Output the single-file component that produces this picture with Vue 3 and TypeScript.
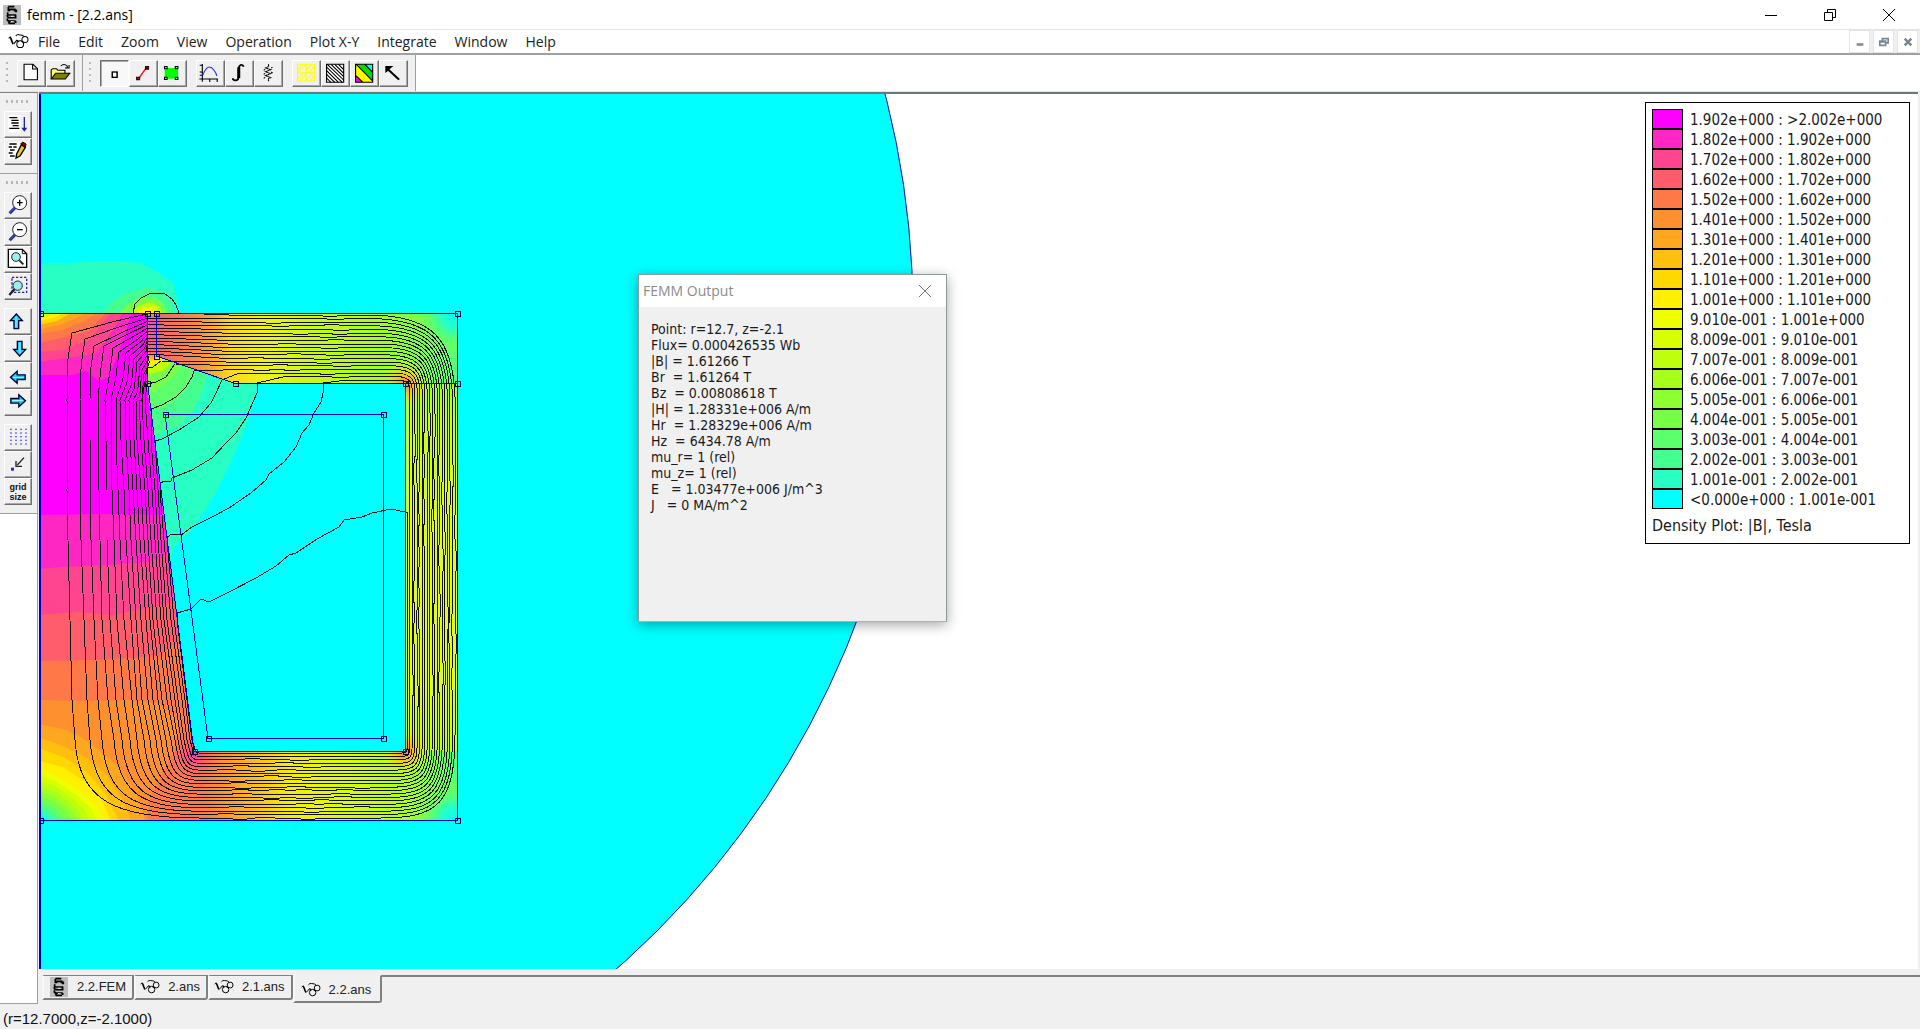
<script setup lang="ts">
type Pt = [number, number]

const menus: string[] = ['File', 'Edit', 'Zoom', 'View', 'Operation', 'Plot X-Y', 'Integrate', 'Window', 'Help']

const fileTools: string[] = ['new', 'open']
const modeTools: string[] = ['point', 'line', 'block']
const plotTools: string[] = ['graph', 'integral', 'circuit']
const viewTools: string[] = ['mesh', 'contour', 'density', 'vector']

const sideTop: string[] = ['script', 'edit']
const sideZoom: string[] = ['zoomin', 'zoomout', 'zoomfit', 'zoomwin']
const sideMove: string[] = ['up', 'down', 'left', 'right']
const sideGrid: string[] = ['grid', 'snap', 'size']

const tabs = [
  { name: '2.2.FEM', icon: 'coil', active: false },
  { name: '2.ans', icon: 'glasses', active: false },
  { name: '2.1.ans', icon: 'glasses', active: false },
  { name: '2.2.ans', icon: 'glasses', active: true },
]

const palette: string[] = [
  '#00ffff', '#27ffc4', '#44ff90', '#5cff6c', '#77ff48', '#8eff30', '#a8ff1c',
  '#c0ff0c', '#d8ff00', '#f0ff00', '#fff000', '#ffd800', '#ffbf0f', '#ffa81f',
  '#ff9030', '#ff7848', '#ff5c6c', '#ff4490', '#ff27c4', '#ff00ff',
]

const legend: string[] = [
  '1.902e+000 : >2.002e+000',
  '1.802e+000 : 1.902e+000',
  '1.702e+000 : 1.802e+000',
  '1.602e+000 : 1.702e+000',
  '1.502e+000 : 1.602e+000',
  '1.401e+000 : 1.502e+000',
  '1.301e+000 : 1.401e+000',
  '1.201e+000 : 1.301e+000',
  '1.101e+000 : 1.201e+000',
  '1.001e+000 : 1.101e+000',
  '9.010e-001 : 1.001e+000',
  '8.009e-001 : 9.010e-001',
  '7.007e-001 : 8.009e-001',
  '6.006e-001 : 7.007e-001',
  '5.005e-001 : 6.006e-001',
  '4.004e-001 : 5.005e-001',
  '3.003e-001 : 4.004e-001',
  '2.002e-001 : 3.003e-001',
  '1.001e-001 : 2.002e-001',
  '<0.000e+000 : 1.001e-001',
]

const output = `Point: r=12.7, z=-2.1
Flux= 0.000426535 Wb
|B| = 1.61266 T
Br  = 1.61264 T
Bz  = 0.00808618 T
|H| = 1.28331e+006 A/m
Hr  = 1.28329e+006 A/m
Hz  = 6434.78 A/m
mu_r= 1 (rel)
mu_z= 1 (rel)
E   = 1.03477e+006 J/m^3
J   = 0 MA/m^2`

// Flux density bands in the centre pole, painted from the strongest outward.
const poleBands: { c: number; d: string }[] = [
  { c: 18, d: 'M40 515L100 514L168 515L205 700V821H40Z' },
  { c: 17, d: 'M40 569L62 567L110 565L150 562L172 552L205 700V821H40Z' },
  { c: 16, d: 'M40 615L80 612L112 615L150 608L170 603L178 590L205 700V821H40Z' },
  { c: 15, d: 'M40 661L90 660L130 658L160 656L182 640L205 730V821H40Z' },
  { c: 14, d: 'M40 700L90 701L130 700L160 703L180 720L176 750L160 780L150 800L148 821H40Z' },
  { c: 13, d: 'M40 724L64 729L80 736L100 750L120 768L138 795L146 821H40Z' },
  { c: 12, d: 'M40 737L64 746L88 758L108 776L124 800L132 821H40Z' },
  { c: 11, d: 'M40 748L64 757L88 772L106 793L120 821H40Z' },
  { c: 10, d: 'M40 761L64 767L88 783L104 802L112 821H40Z' },
  { c: 9, d: 'M40 768L58 776L80 790L98 806L106 821H40Z' },
  { c: 8, d: 'M40 775L56 781L76 794L92 808L98 821H40Z' },
  { c: 7, d: 'M40 781L56 786L74 799L86 810L91 821H40Z' },
  { c: 6, d: 'M40 786L56 791L70 802L80 812L84 821H40Z' },
  { c: 5, d: 'M40 791L54 796L66 805L75 814L78 821H40Z' },
  { c: 4, d: 'M40 796L53 800L63 808L70 816L72 821H40Z' },
  { c: 3, d: 'M40 801L51 805L60 812L66 821H40Z' },
  { c: 2, d: 'M40 806L50 810L57 816L60 821H40Z' },
  { c: 1, d: 'M40 810L47 813L52 817L54 821H40Z' },
  { c: 0, d: 'M40 814L45 816L48 821H40Z' },
  { c: 18, d: 'M40 375L73 375L87 371L100 381L110 377L120 353L133 313H40Z' },
  { c: 17, d: 'M40 362L60 359L96 354L110 337L124 313H40Z' },
  { c: 16, d: 'M40 352L64 350L90 340L112 313H40Z' },
  { c: 15, d: 'M40 343L63 338L90 331L107 313H40Z' },
  { c: 14, d: 'M40 334L63 330L84 322L98 313H40Z' },
  { c: 13, d: 'M40 329L60 325L78 318L86 313H40Z' },
  { c: 11, d: 'M40 325L58 321L72 313H40Z' },
  { c: 10, d: 'M40 322L54 318L64 313H40Z' },
  { c: 8, d: 'M40 319L50 316L54 313H40Z' },
  { c: 5, d: 'M40 316L46 313H40Z' },
]

const airBands: { c: number; d: string }[] = [
  { c: 1, d: 'M40 265L50 263L73 263L93 261L123 261L143 263L157 271L175 283L177 294L180 313H40Z' },
  { c: 2, d: 'M104 313L113 302L128 293L150 287L163 292L172 302L175 313Z' },
  { c: 4, d: 'M120 313L130 304L140 298L155 297L165 304L168 313Z' },
  { c: 7, d: 'M132 313L140 306L150 302L160 306L163 313Z' },
  { c: 10, d: 'M138 313L145 307L155 307L159 313Z' },
  { c: 1, d: 'M148 384L157 356L236 384H258L254 405L247 427L233 460L217 493L200 520L190 533L176 546L171 560Z' },
  { c: 2, d: 'M148 384L157 356L208 374L203 392L193 412L180 425L163 433L155 437Z' },
  { c: 3, d: 'M148 384L157 356L196 370L189 387L178 400L165 408L152 410Z' },
  { c: 4, d: 'M148 384L148 356L182 365L176 375L165 384L150 396Z' },
  { c: 7, d: 'M148 374V356L172 362L165 371Z' },
  { c: 10, d: 'M148 366V356L166 359L158 365Z' },
]

// Flux lines: x of every line at fixed heights of the pole, outermost first.
const COUNT = 20
const poleRows: { y: number; x: number[] }[] = [
  { y: 400, x: [68, 81, 91, 99, 106, 112, 117, 121, 126, 130, 134, 137, 140, 143, 146, 0, 0, 0, 0, 0] },
  { y: 440, x: [69, 81, 91, 99, 107, 112, 117, 122, 127, 131, 135, 138, 142, 145, 149, 152, 0, 0, 0, 0] },
  { y: 490, x: [68, 81, 91, 100, 108, 113, 119, 125, 130, 134, 138, 142, 146, 149, 153, 156, 159, 161, 0, 0] },
  { y: 540, x: [69, 82, 92, 101, 108, 115, 121, 127, 132, 137, 141, 145, 149, 152, 156, 159, 162, 165, 168, 0] },
  { y: 620, x: [71, 85, 95, 103, 111, 118, 125, 132, 137, 142, 147, 151, 154, 158, 162, 165, 168, 172, 175, 178] },
  { y: 700, x: [73, 88, 99, 109, 117, 125, 133, 138, 143, 149, 154, 159, 163, 168, 172, 176, 179, 183, 186, 188] },
  { y: 740, x: [76, 91, 103, 115, 123, 131, 138, 145, 151, 157, 162, 167, 172, 176, 179, 182, 185, 188, 191, 193] },
]

const bends: Pt[] = [
  [73, 333], [86, 339], [95, 346], [105, 346], [114, 348], [120, 352], [127, 353],
  [131, 356], [135, 359], [138, 362], [141, 366], [143, 370], [145, 374],
]

const edgeStarts: Record<number, Pt> = {
  13: [148, 368], 14: [148, 384], 15: [152, 409], 16: [156, 441], 17: [162, 483], 18: [168, 537], 19: [178, 613],
}

const capEnds: Record<number, Pt> = { 13: [162, 361], 14: [176, 364], 15: [195, 371], 16: [223, 380], 17: [258, 383], 18: [324, 383] }

function noise(a: number, b: number): number {
  const s = Math.sin(a * 127.1 + b * 311.7) * 43758.5453
  return s - Math.floor(s)
}

function fluxLine(k: number): string {
  const last = COUNT - 1
  const t = k / last
  const d: string[] = []
  if (k in edgeStarts) {
    d.push(`M${edgeStarts[k][0]} ${edgeStarts[k][1]}`)
  } else {
    const y = k === 0 ? 314 : 315 + k * 3.3
    const [bx, by] = bends[k]
    const mx = (148 + bx) / 2 + 4
    d.push(`M148 ${y}L${mx} ${y + (by - y) * 0.4}L${bx} ${by}L${bx - 4 + t * 3} ${by + 26}`)
  }
  for (const row of poleRows) {
    if (row.x[k] > 0) d.push(`L${row.x[k]} ${row.y}`)
  }
  // lower left turn, bottom leg, lower right turn
  const x0 = poleRows[poleRows.length - 1].x[k]
  const yb = 818 - t * 65
  d.push(`C${x0 + 4} ${740 + (yb - 740) * 0.78} ${x0 + (200 - x0) * 0.32} ${yb} 200 ${yb}`)
  for (let x = 215 + noise(k, 1) * 20; x < 360; x += 22 + noise(k, x) * 36) {
    const step = Math.round(noise(x, k) * 2 - 1)
    d.push(`L${x} ${yb}L${x + 3} ${yb + step}L${x + 17} ${yb + step}L${x + 20} ${yb}`)
  }
  const xr = 456 - t * 48
  const bend = 735 + t * 14
  d.push(`L${382 + t * 21} ${yb}C${xr - 18 + t * 17} ${yb} ${xr} ${yb - 14 + t * 13} ${xr} ${bend}`)
  // right leg, upwards
  const top = k === last ? 512 : 400
  for (let y = 715 - noise(k, 7) * 30; y > top + 30; y -= 28 + noise(k, y) * 50) {
    const step = k > 17 ? 0 : Math.round(noise(y, k) * 2 - 1)
    d.push(`L${xr} ${y}L${xr + step} ${y - 2}L${xr + step} ${y - 22}L${xr} ${y - 24}`)
  }
  if (k === last) {
    d.push('L408 512H406')
    return d.join('')
  }
  const yt = 315 + t * 69
  d.push(`L${xr} ${397 - t * 10}C${xr - 2 + t * 2} ${yt + 24 - t * 22} ${xr - 22 + t * 20} ${yt + 2 - t * 2} ${375 + t * 27} ${Math.min(yt, 381)}`)
  const stop = k === 18 ? 345 : k === 17 ? 285 : 240
  for (let x = 352 - noise(k, 3) * 20; x > stop + 20; x -= 24 + noise(k, x + 5) * 30) {
    const step = Math.round(noise(x, k + 4) * 2 - 1)
    const y = Math.min(yt, 380)
    d.push(`L${x} ${y}L${x - 2} ${y + step}L${x - 16} ${y + step}L${x - 18} ${y}`)
  }
  if (k in capEnds) {
    d.push(`L${stop} ${Math.min(yt, 381)}L${capEnds[k][0]} ${capEnds[k][1]}`)
  } else if (k === 0) {
    d.push('L230 315L180 313')
  } else {
    const y = 315 + k * 3.3
    d.push(`L230 ${yt}L195 ${y + (yt - y) * 0.5}L157 ${y}H148`)
  }
  return d.join('')
}

const fluxLines: string[] = Array.from({ length: COUNT }, (_, k) => fluxLine(k))

const airLines: string[] = [
  '134,313 136,304 142,298 150,294 158,293 166,294 173,299 177,305 180,313',
  '148,368 154,367 162,361',
  '148,384 157,382 167,377 173,368 176,364',
  '152,409 163,405 177,397 187,387 193,377 195,371',
  '156,441 163,439 180,430 200,417 212,403 217,393 223,380',
  '162,483 165,481 172,481 173,478 193,470 213,458 227,443 237,433 247,418 258,393 258,384',
  '168,537 173,534 182,535 193,527 213,517 230,508 252,493 267,480 270,474 285,462 297,447 303,433 310,425 315,413 322,402 324,393 324,383',
  '178,613 192,609 202,599 210,602 230,592 257,578 277,566 290,555 297,553 318,539 340,527 345,520 363,517 373,513 392,509 406,512',
]

const nodes: Pt[] = [
  [41, 313], [148, 313], [157, 313], [157, 356], [148, 383], [236, 383], [406, 383], [458, 313], [458, 383],
  [166, 414], [384, 414], [384, 738], [209, 738], [195, 751], [406, 751], [41, 820], [458, 820],
]

const gridDots: Pt[] = []
for (let r = 0; r < 5; r++) for (let c = 0; c < 4; c++) gridDots.push([19 + c * 15, 14 + r * 11])
</script>

<template>
  <svg class="defs" aria-hidden="true">
    <symbol id="i-coil" viewBox="0 0 54 60">
      <rect width="54" height="60" fill="#bdbdbd" />
      <path d="M16 5h18M14 13h24M16 6v10h24v6M14 22v8h26M14 30q-4 4 4 8h22M14 40q-3 5 2 8h22M18 55h18M38 14v8M38 32v8M38 48v6M18 48v8" fill="none" stroke="#000" stroke-width="5" />
      <path d="M22 18h10M24 34h8M24 50h8" stroke="#eee" stroke-width="3" />
    </symbol>
    <symbol id="i-glasses" viewBox="0 0 62 48">
      <g fill="none" stroke="#000" stroke-width="3">
        <path d="M2 15l5-4l2 4M17 31l10-12M23 8q4-6 10-4q10 0 14 5" />
        <path d="M8 14l7 18" stroke-width="5" />
        <circle cx="36" cy="32" r="10" />
        <circle cx="50" cy="18" r="9" />
        <path d="M27 20l4 6M40 23l6 4" stroke-width="4" />
      </g>
    </symbol>

    <symbol id="i-new" viewBox="0 0 78 81" preserveAspectRatio="none">
      <path d="M19 13h24l12 13v33h-36z" fill="#fff" stroke="#000" stroke-width="3" />
      <path d="M42 13v14h13" fill="none" stroke="#000" stroke-width="3" />
    </symbol>
    <symbol id="i-open" viewBox="0 0 78 81" preserveAspectRatio="none">
      <path d="M14 57V30l4-4h10l4 5h19v9" fill="#ffff70" stroke="#000" stroke-width="3" />
      <path d="M14 57l12-17h38l-12 17z" fill="#808000" stroke="#000" stroke-width="3" />
      <path d="M40 18q8-9 17 0v6M62 15v9h-11" fill="none" stroke="#000" stroke-width="3" />
    </symbol>
    <symbol id="i-point" viewBox="0 0 78 81" preserveAspectRatio="none">
      <rect x="33" y="36" width="13" height="16" fill="#fff" stroke="#000" stroke-width="4" />
    </symbol>
    <symbol id="i-line" viewBox="0 0 78 81" preserveAspectRatio="none">
      <path d="M27 54L46 24" stroke="#f00" stroke-width="4" />
      <path d="M19 50h11v11h-11zM43 18h11v11h-11z" fill="#300" />
      <path d="M23 54h3v3h-3zM47 22h3v3h-3z" fill="#c33" />
    </symbol>
    <symbol id="i-block" viewBox="0 0 78 81" preserveAspectRatio="none">
      <path d="M18 24h36v32h-36z" fill="#0f0" />
      <path d="M16 18h10v10h-10zM45 18h10v10h-10zM16 50h10v10h-10zM45 50h10v10h-10z" fill="#000" />
      <path d="M19 21h4v4h-4zM48 21h4v4h-4zM19 53h4v4h-4zM48 53h4v4h-4z" fill="#7f7" />
    </symbol>
    <symbol id="i-graph" viewBox="0 0 78 81" preserveAspectRatio="none">
      <path d="M17 12v53M9 57h50M10 16h7M10 36h7M37 57v9M57 57v9M10 46h7" stroke="#000" stroke-width="3" fill="none" />
      <path d="M18 46q14-40 30-16q6 8 8 18" stroke="#22f" stroke-width="3" fill="none" />
    </symbol>
    <symbol id="i-integral" viewBox="0 0 78 81" preserveAspectRatio="none">
      <path d="M50 20q-2-7-8-5q-5 2-5 14v18q0 14-9 14q-7 0-7-6" stroke="#000" stroke-width="5" fill="none" />
      <path d="M37 22v32" stroke="#000" stroke-width="8" />
    </symbol>
    <symbol id="i-circuit" viewBox="0 0 78 81" preserveAspectRatio="none">
      <path d="M39 13v7l-8 4l14 5l-14 6l14 6l-14 6l14 6l-6 3v8" stroke="#000" stroke-width="3" fill="none" stroke-dasharray="5 1" />
      <path d="M30 28l-4 3M30 40l-4 3M30 52l-4 3M46 24l4-2M46 36l4 3" stroke="#000" stroke-width="3" />
    </symbol>
    <symbol id="i-mesh" viewBox="0 0 78 81" preserveAspectRatio="none">
      <path d="M15 13h46v50h-46zM38 13v50M15 38h46M15 28l15-15M15 38l23-25M46 38l15-20M38 32l14-19M15 58l18-20M22 63l16-20M38 60l20-22M48 63l13-16" stroke="#ff0" stroke-width="3" fill="none" />
    </symbol>
    <symbol id="i-contour" viewBox="0 0 78 81" preserveAspectRatio="none">
      <path d="M15 13h46v54h-46z" fill="#fff" stroke="#000" stroke-width="3" />
      <path d="M15 54l12 13M15 43l22 24M15 32l32 35M15 21l42 46M17 13l44 47M27 13l34 37M37 13l24 27M47 13l14 16" stroke="#000" stroke-width="3" />
    </symbol>
    <symbol id="i-density" viewBox="0 0 78 81" preserveAspectRatio="none">
      <path d="M15 13h46v54h-46z" fill="#ff0" />
      <path d="M15 48v19h20z" fill="#f0f" />
      <path d="M20 13h26l15 18v36z" fill="#0d0" />
      <path d="M42 13h19v22z" fill="#0ff" />
      <path d="M15 13h46v54h-46zM15 46l20 21M17 13l44 50M40 13l21 24" fill="none" stroke="#000" stroke-width="3" />
    </symbol>
    <symbol id="i-vector" viewBox="0 0 78 81" preserveAspectRatio="none">
      <path d="M22 26L54 59" stroke="#000" stroke-width="6" />
      <path d="M17 18h22l-7 6l-8 9l-7 6z" fill="#000" />
    </symbol>

    <symbol id="i-script" viewBox="0 0 84 81">
      <path d="M12 12h38v52h-38z" fill="#fff" />
      <path d="M16 20h24M22 28h22M22 36h22M26 44h18M16 52h30" stroke="#000" stroke-width="4" />
      <path d="M61 18v40" stroke="#22a" stroke-width="4" />
      <path d="M52 50h18l-9 12z" fill="#22a" />
    </symbol>
    <symbol id="i-edit" viewBox="0 0 84 81">
      <path d="M12 12h42v50h-42z" fill="#fff" />
      <path d="M16 18h22M14 27h10M28 27h10M18 36h14M14 45h12M18 54h14" stroke="#000" stroke-width="4" />
      <path d="M38 48l14-28l12 8l-16 26l-12 6z" fill="#e8c820" stroke="#000" stroke-width="4" />
      <path d="M50 18l6-6l10 6l-2 10z" fill="#800" stroke="#200" stroke-width="3" />
    </symbol>
    <symbol id="i-zoomin" viewBox="0 0 84 81">
      <path d="M17 64l19-20" stroke="#227" stroke-width="9" />
      <path d="M18 62l15-16" stroke="#44d" stroke-width="4" />
      <circle cx="47" cy="32" r="21" fill="#fff" stroke="#222" stroke-width="3" />
      <path d="M39 32h17M47 23v18" stroke="#000" stroke-width="4" />
    </symbol>
    <symbol id="i-zoomout" viewBox="0 0 84 81">
      <path d="M17 64l19-20" stroke="#227" stroke-width="9" />
      <path d="M18 62l15-16" stroke="#44d" stroke-width="4" />
      <circle cx="47" cy="32" r="21" fill="#fff" stroke="#222" stroke-width="3" />
      <path d="M39 32h17" stroke="#000" stroke-width="4" />
    </symbol>
    <symbol id="i-zoomfit" viewBox="0 0 84 81">
      <path d="M13 10h42l13 13v41h-55z" fill="#fff" stroke="#000" stroke-width="4" />
      <path d="M55 10v13h13" fill="none" stroke="#000" stroke-width="3" />
      <circle cx="36" cy="33" r="13" fill="#9ee" stroke="#222" stroke-width="3" />
      <path d="M46 43l12 12" stroke="#222" stroke-width="6" />
    </symbol>
    <symbol id="i-zoomwin" viewBox="0 0 84 81">
      <path d="M24 13h44v45h-44z" fill="none" stroke="#22a" stroke-width="4" stroke-dasharray="7 5" />
      <path d="M16 66l16-18" stroke="#222" stroke-width="7" />
      <circle cx="41" cy="38" r="14" fill="#9ee" stroke="#222" stroke-width="3" />
    </symbol>
    <symbol id="i-arrow" viewBox="0 0 84 81">
      <path d="M37 18L55 38H44V62H30V38H19Z" fill="#2cf" stroke="#003" stroke-width="4" />
      <path d="M36 26V58" stroke="#9ff" stroke-width="3" />
    </symbol>
    <symbol id="i-snap" viewBox="0 0 84 81">
      <path d="M21 50h9v9h-9z" fill="#22f" />
      <path d="M60 20L40 42M36 30v16h18" fill="none" stroke="#222" stroke-width="4" />
    </symbol>
  </svg>

  <div class="app">
    <header class="title">
      <svg class="title-icon"><use href="#i-coil" /></svg>
      <h1>femm - [2.2.ans]</h1>
      <div class="window-controls">
        <button type="button" aria-label="Minimize"><svg viewBox="0 0 14 14"><path d="M1 7.5h12" /></svg></button>
        <button type="button" aria-label="Restore"><svg viewBox="0 0 14 14"><path d="M1.500 4.500h8v8h-8zM4.500 4.500v-3h8v8h-3" /></svg></button>
        <button type="button" aria-label="Close"><svg viewBox="0 0 14 14"><path d="M1 1l12 12M13 1l-12 12" /></svg></button>
      </div>
    </header>

    <nav class="menu">
      <svg class="menu-icon"><use href="#i-glasses" /></svg>
      <button v-for="m in menus" :key="m" type="button">{{ m }}</button>
      <div class="child-controls">
        <button type="button" aria-label="Minimize document"><svg viewBox="0 0 12 12"><path d="M2 9h8" stroke-width="3" /></svg></button>
        <button type="button" aria-label="Restore document"><svg viewBox="0 0 12 12"><path d="M1 5h7v5h-7zM1 6h7M4 4v-2h7v5h-2M4 2h7" stroke-width="2" /></svg></button>
        <button type="button" aria-label="Close document"><svg viewBox="0 0 12 12"><path d="M2 2l8 8M10 2l-8 8" stroke-width="3" /></svg></button>
      </div>
    </nav>

    <div class="toolbar">
      <div class="bar">
        <span class="grip"></span>
        <div class="group">
          <button v-for="i in fileTools" :key="i" type="button" class="tool" :aria-label="i"><svg><use :href="'#i-' + i" /></svg></button>
        </div>
      </div>
      <div class="bar">
        <span class="grip"></span>
        <div class="group">
          <button v-for="i in modeTools" :key="i" type="button" class="tool" :class="{ pressed: i === 'point' }" :aria-label="i"><svg><use :href="'#i-' + i" /></svg></button>
        </div>
        <div class="group">
          <button v-for="i in plotTools" :key="i" type="button" class="tool" :aria-label="i"><svg><use :href="'#i-' + i" /></svg></button>
        </div>
        <div class="group">
          <button v-for="i in viewTools" :key="i" type="button" class="tool" :aria-label="i"><svg><use :href="'#i-' + i" /></svg></button>
        </div>
      </div>
    </div>

    <div class="work">
      <aside class="side">
        <div class="side-bar">
          <span class="grip-h"></span>
          <div class="stack">
            <button v-for="i in sideTop" :key="i" type="button" class="tool side-tool" :aria-label="i"><svg><use :href="'#i-' + i" /></svg></button>
          </div>
        </div>
        <div class="side-bar">
          <span class="grip-h"></span>
          <div class="stack">
            <button v-for="i in sideZoom" :key="i" type="button" class="tool side-tool" :aria-label="i"><svg><use :href="'#i-' + i" /></svg></button>
          </div>
          <div class="stack">
            <button v-for="i in sideMove" :key="i" type="button" class="tool side-tool" :class="'go-' + i" :aria-label="i"><svg><use href="#i-arrow" /></svg></button>
          </div>
          <div class="stack">
            <button v-for="i in sideGrid" :key="i" type="button" class="tool side-tool" :aria-label="i">
              <span v-if="i === 'size'" class="grid-size">grid<br />size</span>
              <svg v-else-if="i === 'grid'" viewBox="0 0 84 81">
                <rect v-for="(p, n) in gridDots" :key="n" :x="p[0]" :y="p[1]" width="4" height="4" fill="#33d" />
              </svg>
              <svg v-else><use href="#i-snap" /></svg>
            </button>
          </div>
        </div>
      </aside>

      <main class="doc">
        <section class="view">
          <svg class="plot" role="img" aria-label="Flux density plot">
            <defs>
              <clipPath id="iron">
                <path clip-rule="evenodd" d="M40 313H458V821H40ZM157 313V356L236 384H406V751H195L148 384V313Z" />
              </clipPath>
              <linearGradient id="g-top" gradientUnits="userSpaceOnUse" x1="148" y1="0" x2="458" y2="0">
                <stop offset="0" stop-color="#f040a0" />
                <stop offset="0.05" stop-color="#f06a6c" />
                <stop offset="0.16" stop-color="#f78c44" />
                <stop offset="0.22" stop-color="#f8b030" />
                <stop offset="0.27" stop-color="#fad820" />
                <stop offset="0.38" stop-color="#eef21c" />
                <stop offset="0.52" stop-color="#ccf61c" />
                <stop offset="0.75" stop-color="#a4fa28" />
                <stop offset="0.88" stop-color="#7cfc48" />
                <stop offset="1" stop-color="#50ff80" />
              </linearGradient>
              <linearGradient id="g-bottom" gradientUnits="userSpaceOnUse" x1="180" y1="0" x2="458" y2="0">
                <stop offset="0" stop-color="#ff6c60" />
                <stop offset="0.1" stop-color="#f98040" />
                <stop offset="0.2" stop-color="#fba428" />
                <stop offset="0.3" stop-color="#fac81c" />
                <stop offset="0.4" stop-color="#f6ec10" />
                <stop offset="0.6" stop-color="#d8fa14" />
                <stop offset="0.8" stop-color="#b0fc20" />
                <stop offset="0.9" stop-color="#84ff40" />
                <stop offset="1" stop-color="#50ff80" />
              </linearGradient>
              <linearGradient id="g-right" gradientUnits="userSpaceOnUse" x1="0" y1="350" x2="0" y2="790">
                <stop offset="0" stop-color="#84ff40" />
                <stop offset="0.15" stop-color="#c4fc28" />
                <stop offset="0.4" stop-color="#e0fa20" />
                <stop offset="0.75" stop-color="#e0fa20" />
                <stop offset="0.9" stop-color="#c4fc28" />
                <stop offset="1" stop-color="#84ff40" />
              </linearGradient>
              <linearGradient id="g-slot" gradientUnits="userSpaceOnUse" x1="0" y1="313" x2="0" y2="362">
                <stop offset="0" stop-color="#ffa020" />
                <stop offset="0.15" stop-color="#f050c0" />
                <stop offset="0.8" stop-color="#ff6070" />
                <stop offset="1" stop-color="#fff000" />
              </linearGradient>
              <radialGradient id="g-cold">
                <stop offset="0" stop-color="#00ffff" />
                <stop offset="0.35" stop-color="#27ffc4" />
                <stop offset="0.6" stop-color="#5cff6c" stop-opacity="0.8" />
                <stop offset="1" stop-color="#8eff30" stop-opacity="0" />
              </radialGradient>
              <radialGradient id="g-warm">
                <stop offset="0" stop-color="#ff7848" />
                <stop offset="0.35" stop-color="#ffc010" stop-opacity="0.9" />
                <stop offset="1" stop-color="#f0ff00" stop-opacity="0" />
              </radialGradient>
              <radialGradient id="g-hot">
                <stop offset="0" stop-color="#ff30b0" />
                <stop offset="0.4" stop-color="#ff5c6c" stop-opacity="0.8" />
                <stop offset="1" stop-color="#ff7848" stop-opacity="0" />
              </radialGradient>
            </defs>
            <g transform="translate(-40 -94)">
              <circle cx="40" cy="313" r="874" fill="#00ffff" stroke="#0000c0" />
              <path v-for="(b, n) in airBands" :key="n" :d="b.d" :fill="palette[b.c]" />
              <path d="M148 313H157V362H148Z" fill="url(#g-slot)" />
              <g clip-path="url(#iron)">
                <rect x="148" y="313" width="310" height="72" fill="url(#g-top)" />
                <rect x="180" y="750" width="278" height="72" fill="url(#g-bottom)" />
                <rect x="406" y="384" width="52" height="367" fill="url(#g-right)" />
                <path d="M40 313H148V384L195 751V821H40Z" :fill="palette[19]" />
                <path v-for="(b, n) in poleBands" :key="n" :d="b.d" :fill="palette[b.c]" />
                <circle cx="194" cy="756" r="30" fill="url(#g-hot)" />
                <circle cx="458" cy="313" r="46" fill="url(#g-cold)" />
                <circle cx="458" cy="821" r="46" fill="url(#g-cold)" />
                <circle cx="406" cy="384" r="26" fill="url(#g-warm)" />
                <circle cx="406" cy="751" r="26" fill="url(#g-warm)" />
              </g>
              <g class="flux">
                <path v-for="(d, n) in fluxLines" :key="n" :d="d" />
                <polyline v-for="(p, n) in airLines" :key="'a' + n" :points="p" />
              </g>
              <g class="edges">
                <path d="M40 313.500H458.500V820.500H40M148.500 313V383L195 751.500H406.500V383.500H236L157.500 356V313M406 383.500H458M166 414.500H384.500V738.500H209Z" />
                <path d="M41 0V980" stroke-width="2" />
              </g>
              <g class="nodes">
                <rect v-for="(p, n) in nodes" :key="n" :x="p[0] - 2" :y="p[1] - 2" width="5" height="5" />
              </g>
            </g>
          </svg>

          <section class="legend">
            <ul>
              <li v-for="(l, n) in legend" :key="l">
                <span class="swatch" :style="{ background: palette[19 - n] }"></span>{{ l }}
              </li>
            </ul>
            <p>Density Plot: |B|, Tesla</p>
          </section>

          <section class="dialog" role="dialog" aria-labelledby="dialog-title">
            <header>
              <h2 id="dialog-title">FEMM Output</h2>
              <button type="button" aria-label="Close output"><svg viewBox="0 0 14 14"><path d="M1 1l12 12M13 1l-12 12" /></svg></button>
            </header>
            <pre>{{ output }}</pre>
          </section>
        </section>

        <nav class="tabs">
          <button v-for="t in tabs" :key="t.name" type="button" :class="{ active: t.active }">
            <svg><use :href="'#i-' + t.icon" /></svg>{{ t.name }}
          </button>
          <span class="tabs-rest"></span>
        </nav>
      </main>
    </div>

    <footer class="status">(r=12.7000,z=-2.1000)</footer>
  </div>
</template>

<style>
body {
  margin: 0;
  overflow: hidden;
}
</style>

<style scoped>
* {
  box-sizing: border-box;
}

button {
  margin: 0;
  padding: 0;
  border: 0;
  background: none;
  font: inherit;
  color: inherit;
}

.defs {
  position: absolute;
  width: 0;
  height: 0;
}

.app {
  display: flex;
  flex-direction: column;
  height: 100vh;
  background: #f0f0f0;
  color: #111;
  font-family: "Open Sans", "Noto Sans", sans-serif;
  font-size: 14px;
}

.title {
  display: flex;
  align-items: center;
  height: 29px;
  flex: none;
  padding: 0 2px;
  background: #fff;
}

.title-icon {
  width: 20px;
  height: 20px;
  margin-right: 5px;
}

h1 {
  margin: 0;
  font-size: 14px;
  font-weight: 400;
  color: #000;
}

.window-controls {
  display: flex;
  margin-left: auto;
}

.window-controls button {
  display: flex;
  align-items: center;
  justify-content: center;
  width: 59px;
  height: 28px;
}

.window-controls svg {
  width: 14px;
  height: 14px;
  fill: none;
  stroke: #000;
}

.menu {
  display: flex;
  align-items: center;
  flex: none;
  height: 26px;
  padding-left: 8px;
  background: #fff;
  border-top: 1px solid #e4e4e4;
  border-bottom: 2px solid #a0a0a0;
  color: #222;
}

.menu-icon {
  width: 21px;
  height: 17px;
}

.menu > button {
  padding: 0 9px;
}

.child-controls {
  display: flex;
  gap: 3px;
  align-self: stretch;
  margin-left: auto;
  padding-right: 2px;
  background: #f0f0f0;
}

.child-controls button {
  display: flex;
  align-items: center;
  justify-content: center;
  width: 21px;
  background: #fff;
  border: 1px solid #e4e4e4;
}

.child-controls svg {
  width: 10px;
  height: 10px;
  fill: none;
  stroke: #7a8794;
}

.toolbar {
  display: flex;
  flex: none;
  height: 37px;
  background: #fff;
  border-bottom: 1px solid #e4e4e4;
}

.bar {
  display: flex;
  align-items: center;
  gap: 9px;
  padding: 0 7px 0 6px;
  background: #f0f0f0;
  border-right: 1px solid #a0a0a0;
}

.grip {
  width: 2px;
  height: 23px;
  background: repeating-linear-gradient(#b8b8b8 0 2px, #f0f0f0 2px 6px);
}

.group {
  display: flex;
}

.tool {
  display: block;
  width: 29px;
  height: 27px;
  border: 1px solid;
  border-color: #fff #707070 #707070 #fff;
  box-shadow: inset -1px -1px #a8a8a8;
}

.tool svg {
  display: block;
  width: 29px;
  height: 27px;
  margin: -1px;
}

.pressed {
  border-color: #707070 #fff #fff #707070;
  box-shadow: inset 1px 1px #a8a8a8;
  background: #f8f8f8;
}

.work {
  display: flex;
  flex: 1;
  min-height: 0;
}

.side {
  width: 38px;
  flex: none;
  background: #fff;
  border-top: 1px solid #808080;
  border-right: 1px solid #a0a0a0;
  border-bottom: 1px solid #a0a0a0;
}

.side-bar {
  display: flex;
  flex-direction: column;
  gap: 8px;
  padding: 7px 4px 8px;
  background: #f0f0f0;
  border-bottom: 1px solid #a0a0a0;
}

.grip-h {
  width: 24px;
  height: 3px;
  margin-left: 2px;
  background: repeating-linear-gradient(90deg, #b8b8b8 0 2px, #f0f0f0 2px 5px);
}

.stack {
  display: flex;
  flex-direction: column;
}

.side-tool,
.side-tool svg {
  width: 28px;
}

.go-down svg {
  transform: rotate(180deg);
}

.go-left svg {
  transform: rotate(270deg);
}

.go-right svg {
  transform: rotate(90deg);
}

.grid-size {
  display: block;
  font: 700 9px/10px "Liberation Sans", Arial, sans-serif;
  text-align: center;
}

.doc {
  display: flex;
  flex-direction: column;
  flex: 1;
  min-width: 0;
}

.view {
  position: relative;
  flex: 1;
  min-height: 0;
  margin: 0 2px 0 1px;
  overflow: hidden;
  background: #fff;
  border-top: 2px solid #6a7a7a;
}

.plot {
  display: block;
  width: 100%;
  height: 100%;
}

.flux,
.edges,
.nodes {
  fill: none;
  shape-rendering: crispEdges;
}

.flux {
  stroke: #101010;
}

.edges {
  stroke: #0000c8;
}

.nodes {
  stroke: #000040;
}

.legend {
  position: absolute;
  top: 8px;
  right: 8px;
  width: 265px;
  padding: 6px;
  background: #fff;
  border: 1px solid #000;
  font: 15px/20px "DejaVu Sans Condensed", "DejaVu Sans", sans-serif;
  color: #1a1a1a;
}

.legend ul {
  margin: 0;
  padding: 0;
  list-style: none;
}

.legend li {
  display: flex;
  gap: 7px;
  height: 20px;
  line-height: 22px;
  white-space: pre;
}

.swatch {
  width: 31px;
  height: 20px;
  border: 1px solid #000;
}

.legend p {
  margin: 7px 0 1px;
  font-size: 16px;
}

.dialog {
  position: absolute;
  top: 180px;
  left: 599px;
  width: 309px;
  height: 348px;
  background: #f0f0f0;
  border: 1px solid #8a9a9a;
  border-bottom-color: #b0b0b0;
  box-shadow: 0 3px 12px rgba(0, 0, 0, 0.35);
}

.dialog header {
  display: flex;
  align-items: center;
  justify-content: space-between;
  height: 32px;
  padding: 0 14px 0 4px;
  background: #fff;
  color: #8c8c8c;
}

.dialog h2 {
  margin: 0;
  font: 400 14px/20px "Open Sans", sans-serif;
}

.dialog header svg {
  display: block;
  width: 14px;
  height: 14px;
  fill: none;
  stroke: #777;
}

.dialog pre {
  margin: 14px 12px;
  font: 14px/16px "DejaVu Sans Condensed", "DejaVu Sans", sans-serif;
  color: #1a1a1a;
}

.tabs {
  display: flex;
  align-items: flex-start;
  flex: none;
  height: 35px;
  padding-top: 6px;
  font: 13px/16px "Liberation Sans", Arial, sans-serif;
  color: #222;
}

.tabs button {
  display: flex;
  align-items: center;
  gap: 8px;
  height: 25px;
  padding: 0 6px 0 4px;
  border: solid #808080;
  border-width: 1px 2px 2px 0;
  border-radius: 0 0 3px 0;
  border-left: 2px solid #f8f8f8;
}

.tabs button:first-child {
  margin-left: 4px;
  padding-left: 5px;
}

.tabs .active {
  height: 28px;
  padding: 3px 9px 0 6px;
  border-top-color: #f0f0f0;
}

.tabs svg {
  width: 20px;
  height: 20px;
}

.tabs-rest {
  flex: 1;
  height: 2px;
  background: #808080;
}

.status {
  flex: none;
  height: 25px;
  padding-left: 3px;
  font: 15px/30px "Liberation Sans", Arial, sans-serif;
  color: #111;
}
</style>
